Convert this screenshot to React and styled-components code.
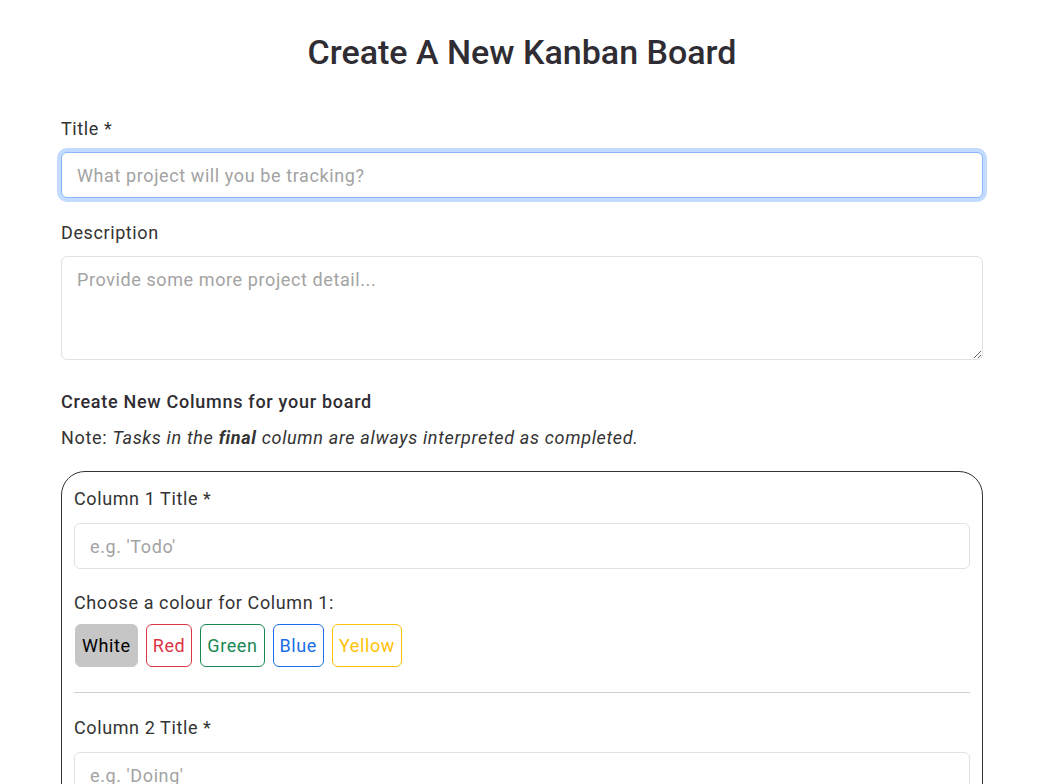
import React from 'react'
import styled, { createGlobalStyle } from 'styled-components'

const GlobalStyle = createGlobalStyle`
  body {
    margin: 0;
    background: #fff;
    font-family: Roboto, "Liberation Sans", sans-serif;
    color: #333;
  }
`

const Page = styled.div`
  width: 922px;
  margin: 0 0 0 61px;
`

const Heading = styled.h1`
  margin: 32px 0 42px;
  text-align: center;
  font-size: 34px;
  line-height: 41px;
  font-weight: 500;
  color: #2f2d33;
`

const Group = styled.div`
  margin-bottom: ${p => p.$gap ?? 21}px;
`

const Label = styled.label`
  display: block;
  font-size: 18px;
  line-height: 27px;
  letter-spacing: 0.6px;
  margin-bottom: ${p => p.$gap || 10}px;
  color: #333;
`

const Input = styled.input`
  box-sizing: border-box;
  display: block;
  width: 100%;
  height: 46px;
  padding: 8px 15px;
  font: inherit;
  font-size: 18px;
  line-height: 28px;
  letter-spacing: 0.6px;
  color: #333;
  border: 1px solid ${p => (p.$focused ? '#86b7fe' : '#dee2e6')};
  border-radius: 6px;
  outline: none;
  box-shadow: ${p => (p.$focused ? '0 0 0 4px rgba(13, 110, 253, 0.25)' : 'none')};

  &::placeholder {
    color: #a3a3a3;
  }
`

const TextArea = styled.textarea`
  box-sizing: border-box;
  display: block;
  width: 100%;
  height: 104px;
  padding: 9px 15px;
  font: inherit;
  font-size: 18px;
  line-height: 27px;
  letter-spacing: 0.6px;
  border: 1px solid #dee2e6;
  border-radius: 6px;
  resize: vertical;
  outline: none;

  &::placeholder {
    color: #a3a3a3;
  }
`

const SectionTitle = styled.h2`
  margin: 28px 0 9px;
  font-size: 18px;
  line-height: 27px;
  letter-spacing: 0.72px;
  font-weight: 500;
  color: #2f2d33;
`

const Note = styled.p`
  margin: 0 0 20px;
  font-size: 18px;
  line-height: 27px;
  letter-spacing: 0.67px;

  em {
    font-style: italic;
  }
`

const ColumnsBox = styled.div`
  border: 1px solid #333;
  border-radius: 24px;
  padding: 13px 12px 40px;
`

const Swatches = styled.div`
  display: flex;
  gap: 8px;
  padding-left: 1px;
`

const Swatch = styled.button`
  font: inherit;
  font-size: 18px;
  line-height: 27px;
  letter-spacing: 0.6px;
  padding: 7px 6px;
  border-radius: 6px;
  background: ${p => (p.$active ? '#c6c6c6' : '#fff')};
  color: ${p => (p.$active ? '#000' : p.$color)};
  border: 1px solid ${p => (p.$active ? '#c6c6c6' : p.$color)};
  cursor: pointer;
`

const Divider = styled.hr`
  border: none;
  border-top: 1px solid #cfcfcf;
  margin: 25px 0 21px;
`

const colours = [
  { name: 'White', color: '#000' },
  { name: 'Red', color: '#dc3545' },
  { name: 'Green', color: '#198754' },
  { name: 'Blue', color: '#1a6ee8' },
  { name: 'Yellow', color: '#ffc107' },
]

const columns = [
  { n: 1, placeholder: "e.g. 'Todo'" },
  { n: 2, placeholder: "e.g. 'Doing'" },
  { n: 3, placeholder: "e.g. 'Done'" },
]

function ColumnFields({ n, placeholder, last }) {
  return (
    <>
      <Group $gap={20}>
        <Label $gap={11}>Column {n} Title *</Label>
        <Input placeholder={placeholder} />
      </Group>
      <Label $gap={8}>Choose a colour for Column {n}:</Label>
      <Swatches>
        {colours.map(c => (
          <Swatch key={c.name} $color={c.color} $active={c.name === 'White'}>
            {c.name}
          </Swatch>
        ))}
      </Swatches>
      {!last && <Divider />}
    </>
  )
}

export default function App() {
  return (
    <>
      <GlobalStyle />
      <Page>
        <Heading>Create A New Kanban Board</Heading>
        <Group>
          <Label>Title *</Label>
          <Input $focused placeholder="What project will you be tracking?" />
        </Group>
        <Group $gap={0}>
          <Label>Description</Label>
          <TextArea placeholder="Provide some more project detail..." />
        </Group>
        <SectionTitle>Create New Columns for your board</SectionTitle>
        <Note>
          Note: <em>Tasks in the <b>final</b> column are always interpreted as completed.</em>
        </Note>
        <ColumnsBox>
          {columns.map((c, i) => (
            <ColumnFields key={c.n} {...c} last={i === columns.length - 1} />
          ))}
        </ColumnsBox>
      </Page>
    </>
  )
}
